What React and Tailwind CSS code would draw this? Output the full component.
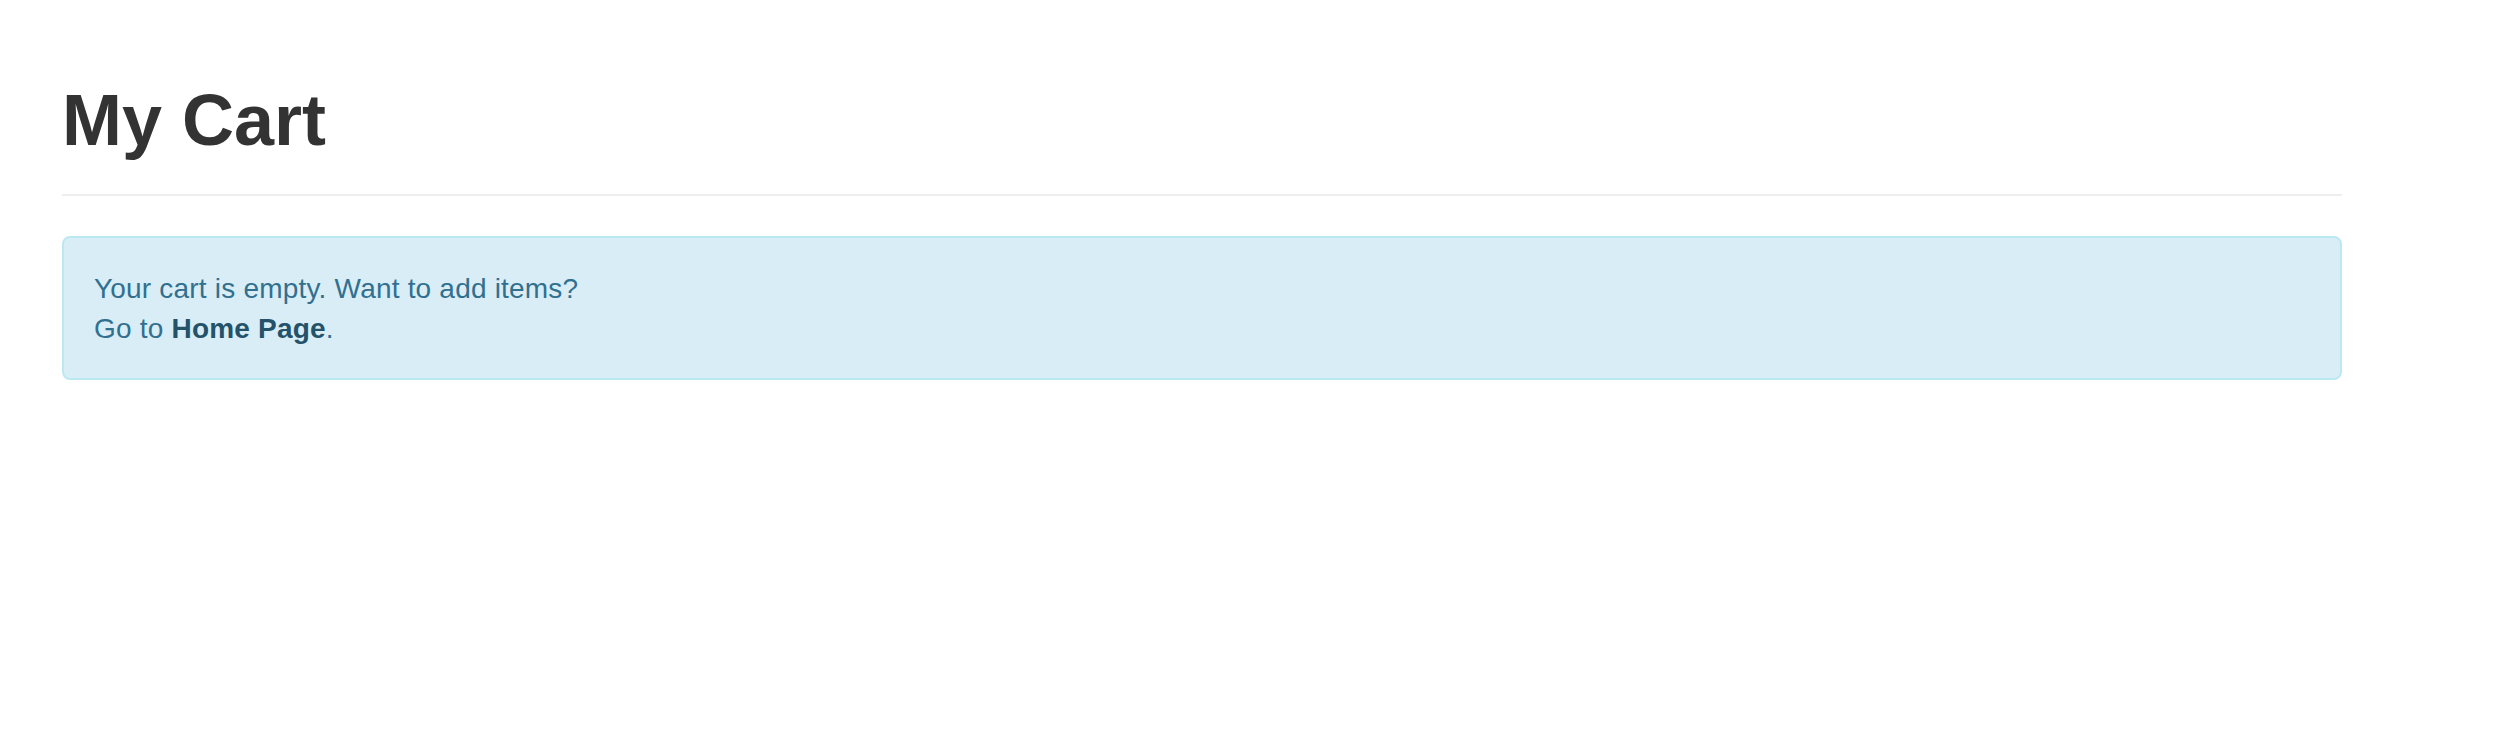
import React from 'react';

export default function App() {
  return (
    <div className="min-h-screen bg-white font-['Liberation_Sans',Arial,sans-serif] text-[28px] leading-[40px] text-[#333]">
      <div className="ml-[62px] w-[2280px]">
        {/* Page header */}
        <div className="pt-[82px] pb-[36px] border-b-2 border-[#eee]">
          <h1 className="text-[72px] leading-[76px] font-bold">My Cart</h1>
        </div>

        {/* Empty cart alert */}
        <div className="mt-[40px] pt-[31px] pb-[29px] px-[30px] border-2 border-[#bce8f1] bg-[#d9edf7] rounded-[8px] text-[#31708f] tracking-[0.2px]">
          <p>Your cart is empty. Want to add items?</p>
          <p>
            Go to <a href="#" className="font-bold text-[#245269]">Home Page</a>.
          </p>
        </div>
      </div>
    </div>
  );
}
